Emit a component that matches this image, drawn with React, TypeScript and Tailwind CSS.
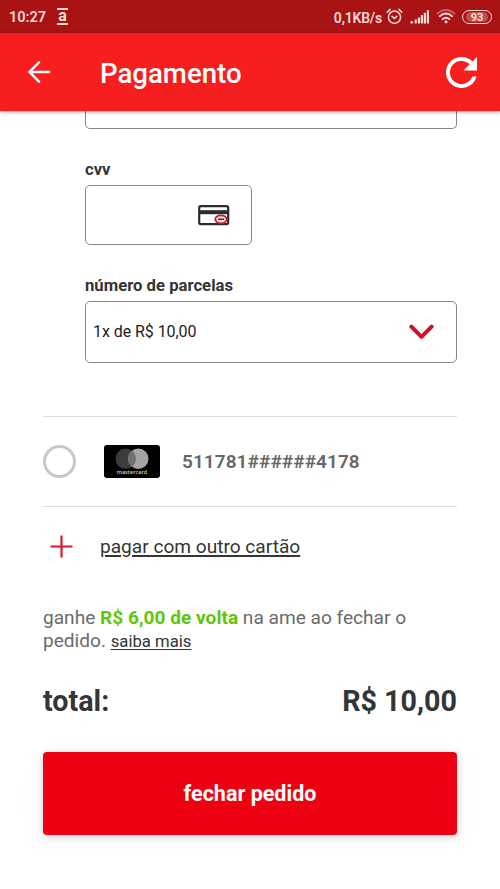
import { useState } from "react";

function AlarmIcon() {
  return (
    <svg width="17" height="17" viewBox="0 0 17 17" fill="none" stroke="currentColor" strokeWidth="1.5" strokeLinecap="round" strokeLinejoin="round">
      <circle cx="8.5" cy="9.2" r="6.1" />
      <path d="M6 8.4l2.5 2 2.4-2.2M1.2 4.2L4 1.4M15.8 4.2L13 1.4" />
    </svg>
  );
}

function SignalIcon() {
  return (
    <svg width="20" height="14" viewBox="0 0 20 14" fill="currentColor">
      <rect x="0.5" y="11" width="2.4" height="2.5" rx="0.5" />
      <rect x="4.6" y="9.5" width="2.2" height="4" rx="0.5" />
      <rect x="7.8" y="7.5" width="2.2" height="6" rx="0.5" />
      <rect x="10.8" y="5" width="2.2" height="8.5" rx="0.5" />
      <rect x="13.8" y="2.7" width="2.2" height="10.8" rx="0.5" />
      <rect x="16.8" y="0.3" width="2.2" height="13.2" rx="0.5" />
    </svg>
  );
}

function WifiIcon() {
  return (
    <svg width="20" height="15" viewBox="0 0 20 15" fill="none" stroke="currentColor" strokeWidth="1.9" strokeLinecap="round">
      <path d="M1.4 4.7Q10-2.8 18.6 4.7" strokeWidth="1.6" opacity="0.4" />
      <path d="M3.8 7.2Q10 1.8 16.2 7.2" />
      <path d="M6.6 10.1Q10 7.2 13.4 10.1" />
      <circle cx="10" cy="12.7" r="1.5" fill="currentColor" stroke="none" />
    </svg>
  );
}

function StatusBar() {
  return (
    <div className="flex h-[33px] items-center bg-[#a91314] text-[#fbdcd9]">
      <span className="ml-[9px] w-[48px] pt-[3px] text-[14.5px] leading-none font-semibold whitespace-nowrap">10:27</span>
      <span className="flex h-[17px] w-[11px] items-center justify-center border-y-2 border-current text-[16px] leading-none font-bold">
        <span className="-mt-[2px]">a</span>
      </span>
      <span className="ml-auto pt-[2px] text-[14px] leading-none font-semibold tracking-[-0.2px] whitespace-nowrap">0,1KB/s</span>
      <div className="ml-[4px] flex items-center">
        <AlarmIcon />
        <span className="ml-[7px]">
          <SignalIcon />
        </span>
        <span className="ml-[6px]">
          <WifiIcon />
        </span>
      </div>
      <div className="mr-[8px] ml-[6px] flex h-[14px] w-[30px] items-center justify-center rounded-full border-[1.5px] border-current">
        <span className="flex h-[10px] w-[22px] items-center justify-center rounded-full bg-[#c4504f] pt-px text-[11px] leading-none font-bold">
          93
        </span>
      </div>
    </div>
  );
}

function Header() {
  return (
    <header className="relative z-10 flex h-[78px] items-center bg-[#f71e1f] text-white shadow-[0_1px_4px_rgba(0,0,0,0.4)]">
      <button type="button" aria-label="voltar" className="ml-[28px]">
        <svg width="23" height="22" viewBox="0 0 23 22" fill="none" stroke="currentColor" strokeWidth="2.5" strokeLinecap="round" strokeLinejoin="round">
          <path d="M21.2 11H1.5M11 1.3L1.5 11L11 20.7" />
        </svg>
      </button>
      <h1 className="ml-[49px] pt-[3px] text-[27.6px] leading-none font-medium">Pagamento</h1>
      <button type="button" aria-label="atualizar" className="mr-[23px] ml-auto">
        <svg width="31" height="31" viewBox="4 4 16 16" fill="currentColor">
          <path d="M17.65 6.35A7.96 7.96 0 0 0 12 4a8 8 0 1 0 7.73 10h-2.08A6 6 0 1 1 12 6c1.66 0 3.14.69 4.22 1.78L13 11h7V4z" />
        </svg>
      </button>
    </header>
  );
}

function CvvIcon() {
  return (
    <svg width="32" height="21" viewBox="0 0 32 21" fill="none">
      <rect x="1.2" y="1.2" width="29" height="18" rx="1.7" stroke="#282c2e" strokeWidth="2.2" />
      <path d="M1 7.2h29" stroke="#282c2e" strokeWidth="4" />
      <ellipse cx="23" cy="14.3" rx="5.7" ry="4" fill="#f6dcd8" stroke="#c5142b" strokeWidth="1.8" />
      <path d="M20 14.3h6" stroke="#383030" strokeWidth="1.5" />
    </svg>
  );
}

function MastercardLogo() {
  return (
    <div className="flex h-[33px] w-[56px] flex-col items-center rounded-[3px] bg-black">
      <svg className="mt-[3px] shrink-0" width="34" height="21" viewBox="0 0 34 21">
        <circle cx="10.7" cy="10.7" r="10.2" fill="#3b3b3b" />
        <circle cx="23.3" cy="10.7" r="10.2" fill="#a5a5a5" />
        <path d="M17 2.7a10.2 10.2 0 0 1 0 16a10.2 10.2 0 0 1 0-16" fill="#707070" />
      </svg>
      <span className="font-['Open_Sans',sans-serif] text-[5.3px] leading-[6px] font-semibold tracking-[0.1px] text-[#d4d4d4]">
        mastercard
      </span>
    </div>
  );
}

export default function App() {
  const [selected, setSelected] = useState(false);

  return (
    <div className="h-[889px] w-[500px] overflow-hidden bg-white font-[Roboto,sans-serif] text-[#333536]">
      <StatusBar />
      <Header />

      <main className="px-[43px]">
        <section className="pl-[42px]">
          <div className="h-[18px] rounded-b-[5px] border border-t-0 border-[#858585]" />

          <p className="mt-[31px] text-[16.6px] leading-5 font-bold">cvv</p>
          <div className="mt-[5px] flex h-[60px] w-[167px] items-center justify-end rounded-[5px] border border-[#858585] pr-[21px]">
            <CvvIcon />
          </div>

          <p className="mt-[31px] text-[16.7px] leading-5 font-bold">número de parcelas</p>
          <button
            type="button"
            className="mt-[5px] flex h-[62px] w-full items-center justify-between rounded-[5px] border border-[#858585] pr-[22px] pl-[7px] text-[16px] text-[#1d1d1d]"
          >
            <span className="-mt-px tracking-[-0.06px]">1x de R$ 10,00</span>
            <svg className="-mt-px" width="25" height="16" viewBox="0 0 25 16" fill="none" stroke="#cf1127" strokeWidth="4" strokeLinecap="round" strokeLinejoin="round">
              <path d="M2.4 2.7L12.5 12.8L22.6 2.7" />
            </svg>
          </button>
        </section>

        <button
          type="button"
          onClick={() => setSelected(!selected)}
          className="mt-[53px] flex h-[91px] w-full items-center border-y-[1.5px] border-[#dedede]"
        >
          <span className="-mt-px flex size-[33px] items-center justify-center rounded-full border-3 border-[#c8c8c8]">
            {selected ? <span className="size-4 rounded-full bg-[#ed0012]" /> : null}
          </span>
          <span className="-mt-px ml-[28px]">
            <MastercardLogo />
          </span>
          <span className="mt-px ml-[22px] text-[19px] font-semibold tracking-[0.07px] text-[#666]">511781######4178</span>
        </button>

        <button type="button" className="flex h-[79px] items-center pl-[7px]">
          <svg className="-mt-px" width="23" height="23" viewBox="0 0 23 23" stroke="#d71b30" strokeWidth="2.2">
            <path d="M0.5 11.5h22M11.5 0.5v22" />
          </svg>
          <span className="mt-px ml-[27px] text-[19.1px] underline decoration-[1.5px] underline-offset-2">
            pagar com outro cartão
          </span>
        </button>

        <p className="mt-[21px] text-[19.1px] leading-[22.5px] text-[#6b6b6b]">
          ganhe <strong className="font-bold text-[#61c50c]">R$ 6,00 de volta</strong> na ame ao fechar o
          <br />
          pedido. <a className="text-[16.7px] text-[#333536] underline underline-offset-2">saiba mais</a>
        </p>

        <div className="mt-[31px] flex h-[36px] items-center justify-between text-[28.7px] font-bold">
          <span>total:</span>
          <span>R$ 10,00</span>
        </div>

        <button
          type="button"
          className="mt-[32px] h-[83px] w-full rounded-[4px] bg-[#ed0012] pt-[2px] text-[21.5px] font-bold text-white shadow-[0_2px_8px_rgba(0,0,0,0.2)]"
        >
          fechar pedido
        </button>
      </main>
    </div>
  );
}
